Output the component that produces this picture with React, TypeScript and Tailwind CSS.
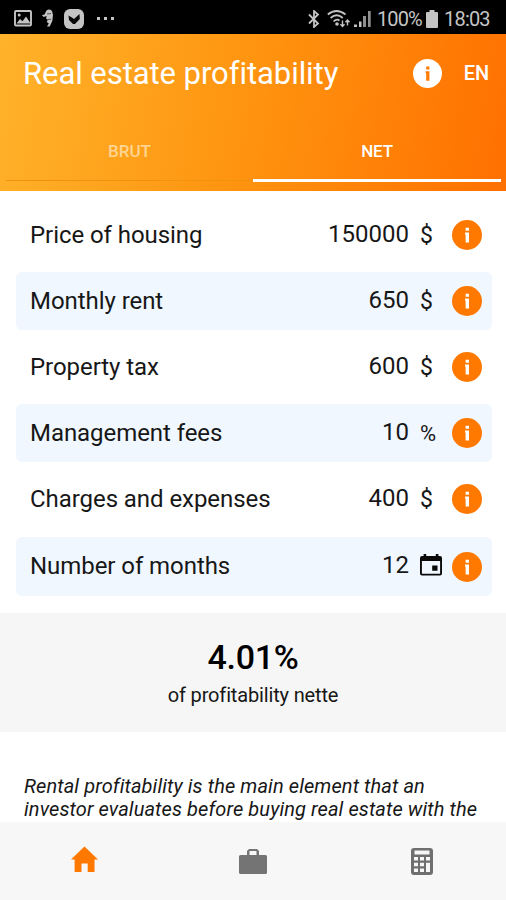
import React from "react";

function InfoIcon({ className, hole }: { className: string; hole: string }) {
  return (
    <svg viewBox="0 0 30 30" className={className}>
      <circle cx="15" cy="15" r="15" fill="currentColor" />
      <path d="M13.600 7.800h3.400v3h-3.400zM13 12.600H17v10h-3.400v-8.200H13z" fill={hole} />
    </svg>
  );
}

function EventIcon() {
  return (
    <svg viewBox="0 0 22 22" className="mb-[3px] h-[22px] w-[22px]">
      <path
        fillRule="evenodd"
        d="M3.600 0h2.600v2h9.600V0h2.600v2H20a2 2 0 0 1 2 2v15.600a2 2 0 0 1-2 2H2a2 2 0 0 1-2-2V4a2 2 0 0 1 2-2h1.600zM1.900 7v12.700h18.200V7zM12.200 11.500h5.300v5.300h-5.300z"
        fill="#0a0a0a"
      />
    </svg>
  );
}

type Row = { label: string; value: string; unit: string };

const rows: Row[] = [
  { label: "Price of housing", value: "150000", unit: "$" },
  { label: "Monthly rent", value: "650", unit: "$" },
  { label: "Property tax", value: "600", unit: "$" },
  { label: "Management fees", value: "10", unit: "%" },
  { label: "Charges and expenses", value: "400", unit: "$" },
  { label: "Number of months", value: "12", unit: "event" },
];

function StatusBar() {
  return (
    <div className="flex h-[34px] shrink-0 items-center bg-black pt-[3px] pr-[14px] pl-[14px] text-[#c4c4c4]">
      <svg viewBox="0 0 18 17" className="h-[17px] w-[18px]">
        <rect x="1" y="1" width="16" height="14.500" rx="1" fill="none" stroke="currentColor" strokeWidth="1.900" />
        <circle cx="5.200" cy="5" r="1.500" fill="currentColor" />
        <path d="M2.500 13.500 6 9l2.500 2.300L12 6.500l4 6v1z" fill="currentColor" />
      </svg>
      <svg viewBox="0 0 12 19" className="ml-[10px] h-[19px] w-[12px]">
        <path d="M4.500 1.500Q7.500-.5 10 2l1 4-.7 6-2.600 5.500H5l1.800-3-2-1.500 1-2.500L4 9.500 4.700 7 1.500 8 0 6l2.500-.6z" fill="currentColor" />
        <path d="m5 5 4-.5M6 10.500l3-.3" stroke="#333" strokeWidth=".8" />
      </svg>
      <svg viewBox="0 0 20 20" className="ml-[10px] h-[20px] w-[20px]">
        <rect width="20" height="20" rx="6" fill="currentColor" />
        <path d="M4.500 6.500 8.300 8.800 10 10l5.500-5 .3 5L11 15H9L5 11z" fill="#080808" />
      </svg>
      <div className="ml-[13px] flex gap-[4px]">
        <span className="h-[3px] w-[3px] bg-current" />
        <span className="h-[3px] w-[3px] bg-current" />
        <span className="h-[3px] w-[3px] bg-current" />
      </div>
      <div className="grow" />
      <svg viewBox="0 0 12 18" className="h-[18px] w-[12px]">
        <path d="m1 4.500 9 9L6 17V1l4 3.500-9 9" fill="none" stroke="currentColor" strokeWidth="1.800" />
      </svg>
      <svg viewBox="0 0 24 18" className="ml-[7px] h-[18px] w-[24px]">
        <g fill="none" stroke="currentColor" strokeWidth="1.700">
          <path d="M.8 4.500Q9.500-2.500 18.500 4.500M3.600 8Q9.700 2.500 15.800 8M6.500 11.500Q9.700 8.500 12.500 10.500" />
        </g>
        <circle cx="10" cy="14" r="1.800" fill="currentColor" />
        <path d="M15.500 10.500v6m-2-2.200 2 2.200 2-2.200M20.500 15.500v-5.500m-2 2.200 2-2.200 2 2.200" fill="none" stroke="currentColor" strokeWidth="1.400" />
      </svg>
      <svg viewBox="0 0 18 18" className="ml-[2px] h-[18px] w-[18px]">
        <path d="M1 14.500h3V17H1zM6 11.500h2.500V17H6z" fill="currentColor" />
        <path d="M10 6h3v11h-3zM15 1h2.700v16H15z" fill="#8f8f8f" />
      </svg>
      <span className="ml-[6px] w-[45px] text-[20px] leading-[24px] tracking-[-0.9px] whitespace-nowrap">100%</span>
      <svg viewBox="0 0 12 18" className="ml-[4px] h-[18px] w-[12px]">
        <path d="M3.500 0h5v2H11a1 1 0 0 1 1 1v14a1 1 0 0 1-1 1H1a1 1 0 0 1-1-1V3a1 1 0 0 1 1-1h2.500z" fill="currentColor" />
      </svg>
      <span className="ml-[6px] w-[48px] text-[20px] leading-[24px] tracking-[-0.8px] whitespace-nowrap">18:03</span>
    </div>
  );
}

function Header() {
  return (
    <header className="flex h-[157px] shrink-0 flex-col bg-[linear-gradient(100deg,#ffb32a_0%,#ff930f_50%,#ff7000_100%)] text-white">
      <div className="flex h-[78px] items-center pr-[17px] pl-[23px]">
        <h1 className="grow pt-[2px] text-[31px] leading-[40px] tracking-[-0.06px]">Real estate profitability</h1>
        <InfoIcon className="h-[29px] w-[29px] text-white" hole="#ff7d07" />
        <span className="ml-[22px] text-[20px] leading-[24px] font-medium tracking-[-0.1px]">EN</span>
      </div>
      <nav className="grid grow grid-cols-2 px-[5px] text-[17px] leading-[20px] font-medium">
        <div className="flex h-[70px] flex-col items-center pt-[29px] pl-px text-[#ffd591]">
          <span className="grow">BRUT</span>
          <span className="mb-px h-px w-full bg-[#f0920f]" />
        </div>
        <div className="flex h-[70px] flex-col items-center border-b-[3px] border-white pt-[29px] tracking-[-0.2px]">NET</div>
      </nav>
    </header>
  );
}

export default function App() {
  return (
    <div className="flex h-[900px] w-[506px] flex-col overflow-hidden bg-white font-['Roboto',sans-serif] text-[#171717]">
      <StatusBar />
      <Header />
      <main className="flex h-[422px] shrink-0 flex-col gap-[8px] pt-[15px] pr-[14px] pl-[16px]">
        {rows.map((row, i) => (
          <div
            key={row.label}
            className={`flex h-[58px] shrink-0 items-center rounded-[6px] pr-[10px] pl-[14px] last:mt-px last:h-[59px] ${i % 2 ? "bg-[#f0f7ff]" : ""}`}
          >
            <span className={`grow text-[24px] leading-[28px] tracking-[-0.06px] ${i === 5 ? "pb-[2px]" : ""}`}>{row.label}</span>
            <span className="pb-[3px] text-[24px] leading-[28px]">{row.value}</span>
            <span className="ml-[11px] flex w-[32px] items-center text-[23px] leading-[28px]">
              {row.unit === "event" ? (
                <EventIcon />
              ) : row.unit === "%" ? (
                <span className="pt-[2px] text-[22px]">%</span>
              ) : (
                <span className="pt-[2px]">{row.unit}</span>
              )}
            </span>
            <InfoIcon className="h-[30px] w-[30px] text-[#ff7800]" hole="#fff" />
          </div>
        ))}
      </main>
      <section className="flex h-[119px] shrink-0 flex-col items-center bg-[#f6f6f6] pt-[24px]">
        <p className="text-[34px] leading-[40px] font-medium tracking-[-0.3px] text-black">4.01%</p>
        <p className="mt-[6px] text-[20px] leading-[24px] tracking-[-0.15px]">of profitability nette</p>
      </section>
      <section className="h-[90px] shrink-0 overflow-hidden pt-[43px] pl-[24px] text-[20px] leading-[23px] whitespace-nowrap italic">
        <p className="tracking-[0.1px]">Rental profitability is the main element that an</p>
        <p className="tracking-[0.1px]">investor evaluates before buying real estate with the</p>
      </section>
      <footer className="grid grow grid-cols-3 justify-items-center bg-[#f7f7f7] pt-[24px]">
        <svg viewBox="0 0 27 27" className="h-[27px] w-[27px] text-[#ff7800]">
          <path d="M13.500 .5 27 13.500h-3.500V26h-6.800v-8.500h-6.200V26H3.600V13.500H0z" fill="currentColor" />
        </svg>
        <svg viewBox="0 0 28 29" className="h-[29px] w-[28px] text-[#747474]">
          <path fillRule="evenodd" d="M10 3h8l2 2v4h6.500A1.500 1.500 0 0 1 28 10.500v16a1.500 1.500 0 0 1-1.500 1.500h-25A1.500 1.500 0 0 1 0 26.500v-16A1.500 1.500 0 0 1 1.500 9H8V5zM10.500 5v4h7V5z" fill="currentColor" />
        </svg>
        <svg viewBox="0 0 22 28" className="h-[28px] w-[22px] overflow-visible text-[#6f6f6f]">
          <path
            fillRule="evenodd"
            d="M3 2h16a3 3 0 0 1 3 3v21a3 3 0 0 1-3 3H3a3 3 0 0 1-3-3V5a3 3 0 0 1 3-3zM3.500 4.500v4h15v-4zM3 11v3.500h4V11zM9 11v3.500h4V11zM15 11v3.500h4V11zM3 16.700v3.500h4v-3.500zM9 16.700v3.500h4v-3.500zM15 16.700v9.300h4v-9.300zM3 22.500v3.500h4v-3.500zM9 22.500v3.500h4v-3.500z"
            fill="currentColor"
          />
        </svg>
      </footer>
    </div>
  );
}
